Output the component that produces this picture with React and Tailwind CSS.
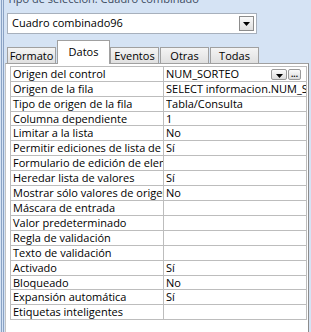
const rows = [
  ['Origen del control', 'NUM_SORTEO', 'combo'],
  ['Origen de la fila', 'SELECT informacion.NUM_SORTEO FROM informacion;'],
  ['Tipo de origen de la fila', 'Tabla/Consulta'],
  ['Columna dependiente', '1'],
  ['Limitar a la lista', 'No'],
  ['Permitir ediciones de lista de valores', 'Sí'],
  ['Formulario de edición de elementos de lista', ''],
  ['Heredar lista de valores', 'Sí'],
  ['Mostrar sólo valores de origen de la fila', 'No'],
  ['Máscara de entrada', ''],
  ['Valor predeterminado', ''],
  ['Regla de validación', ''],
  ['Texto de validación', ''],
  ['Activado', 'Sí'],
  ['Bloqueado', 'No'],
  ['Expansión automática', 'Sí'],
  ['Etiquetas inteligentes', ''],
]

const tabs = ['Formato', 'Datos', 'Eventos', 'Otras', 'Todas']

function DownArrow() {
  return (
    <svg width="7" height="4" viewBox="0 0 7 4">
      <path d="M0 0h7L3.5 4z" fill="#000" />
    </svg>
  )
}

function Row({ label, value, kind, short }) {
  return (
    <div className={short ? 'flex h-[14px] border-b border-[#bdbdbd]' : 'flex h-[15px] border-b border-[#bdbdbd]'}>
      <div className="w-[153px] shrink-0 border-r border-[#bdbdbd] pl-[2px] overflow-hidden whitespace-nowrap leading-[14px]">{label}</div>
      <div className="flex-1 min-w-0 flex items-center pl-[2px] overflow-hidden whitespace-nowrap leading-[14px]">
        <span className="flex-1 overflow-hidden">{value}</span>
        {kind === 'combo' && (
          <div className="flex gap-[1px] pr-[5px]">
            <div className="w-[16px] h-[11px] border border-[#9a9a9a] rounded-[2px] bg-gradient-to-b from-[#fbfbfb] to-[#dcdcdc] flex items-end justify-center pb-[1px]">
              <DownArrow />
            </div>
            <div className="w-[13px] h-[11px] border border-[#9a9a9a] rounded-[2px] bg-gradient-to-b from-[#fbfbfb] to-[#dcdcdc] flex items-center justify-center text-[8px] leading-none font-bold">...</div>
          </div>
        )}
      </div>
    </div>
  )
}

export default function App() {
  return (
    <div className="w-[311px] h-[332px] bg-[#d5e3f4] flex overflow-hidden font-['Open_Sans',sans-serif] text-[11px] text-black">
      <div className="w-[5px] shrink-0 flex">
        <div className="w-px" />
        <div className="w-px bg-[#8aa2c4]" />
        <div className="w-px" />
        <div className="w-px bg-[#8aa2c4]" />
      </div>
      <div className="flex-1 flex flex-col">
        <div className="h-[12px] overflow-hidden pl-[2px]">
          <div className="-mt-[9px] leading-[16px] text-[#3b4a5e] whitespace-nowrap">Tipo de selección:  Cuadro combinado</div>
        </div>
        <div className="ml-[2px] mt-[1px] w-[250px] h-[21px] bg-white border border-[#a7b0bc] flex items-center">
          <span className="flex-1 pl-[4px]">Cuadro combinado96</span>
          <div className="w-[15px] h-[15px] mr-[2px] border border-[#8c8c8c] bg-gradient-to-b from-[#fafafa] to-[#dedede] flex items-center justify-center">
            <DownArrow />
          </div>
        </div>
        <div className="mt-[5px] ml-[2px] h-[24px] flex items-end">
          {tabs.map(t =>
            t === 'Datos' ? (
              <div key={t} className="w-[53px] h-[24px] bg-white border-t border-l border-r border-[#a0a0a0] flex justify-center pt-[4px] leading-[14px] relative -mb-px z-10">{t}</div>
            ) : (
              <div key={t} className="h-[16px] px-[5px] mr-[1px] bg-gradient-to-b from-[#f4f4f4] to-[#e0e0e0] border-t border-l border-r border-[#a0a0a0] flex items-center justify-center leading-[14px] w-[49px]">{t}</div>
            )
          )}
        </div>
        <div className="w-[304px] flex-1 bg-white border-l border-t border-r border-l-[#c4c4c4] border-t-[#a0a0a0] border-r-[#8c8c8c] pl-[4px] pt-[2px]">
          <div className="w-[297px] border-t border-l border-r border-[#bdbdbd]">
            {rows.map(([l, v, k], i) => (
              <Row key={l} label={l} value={v} kind={k} short={i === 3 || i === 14} />
            ))}
          </div>
        </div>
      </div>
    </div>
  )
}
